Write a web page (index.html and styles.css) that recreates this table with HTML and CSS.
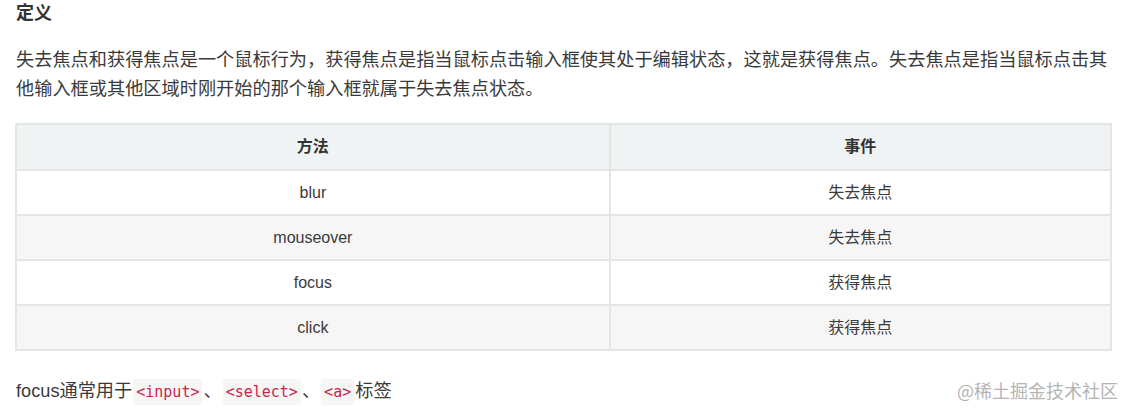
FILE: index.html
```html
<!DOCTYPE html>
<html lang="zh-CN">
<head>
<meta charset="utf-8">
<title>定义</title>
<link rel="stylesheet" href="styles.css">
</head>
<body>
<main class="article">
  <h4 class="heading">定义</h4>
  <p class="para">失去焦点和获得焦点是一个鼠标行为，获得焦点是指当鼠标点击输入框使其处于编辑状态，这就是获得焦点。失去焦点是指当鼠标点击其他输入框或其他区域时刚开始的那个输入框就属于失去焦点状态。</p>
  <table class="grid">
    <thead>
      <tr><th>方法</th><th>事件</th></tr>
    </thead>
    <tbody>
      <tr><td>blur</td><td>失去焦点</td></tr>
      <tr><td>mouseover</td><td>失去焦点</td></tr>
      <tr><td>focus</td><td>获得焦点</td></tr>
      <tr><td>click</td><td>获得焦点</td></tr>
    </tbody>
  </table>
  <p class="para last">focus通常用于<code class="code">&lt;input&gt;</code>、<code class="code">&lt;select&gt;</code>、<code class="code">&lt;a&gt;</code>标签</p>
  <div class="watermark">@稀土掘金技术社区</div>
</main>
</body>
</html>
```

FILE: styles.css
```css
html, body {
  margin: 0;
  padding: 0;
  background: #ffffff;
}
body {
  font-family: "Liberation Sans", "Noto Sans CJK SC", sans-serif;
  color: #333333;
}
.article {
  position: relative;
  width: 1097px;
  padding: 0 0 0 15px;
  height: 415px;
  box-sizing: content-box;
}
.heading {
  margin: 0;
  padding-left: 1px;
  font-size: 18px;
  line-height: 26px;
  font-weight: 700;
  color: #333333;
}
.para {
  margin: 20px 0 0 0;
  padding-left: 1px;
  font-size: 18.2px;
  line-height: 29px;
  color: #3a3a3a;
}
.grid {
  width: 100%;
  margin-top: 19px;
  border-collapse: collapse;
  font-size: 16px;
  color: #3a3a3a;
}
.grid th, .grid td {
  border: 2px solid #e4e6e6;
  text-align: center;
  line-height: 24px;
}
.grid th {
  padding: 10px 8px;
  background: #eff3f3;
  font-weight: 700;
  color: #333333;
}
.grid td {
  padding: 9.5px 8px;
}
.grid tbody tr:nth-child(even) td {
  background: #f6f6f6;
}
.grid tbody tr:nth-child(odd) td {
  background: #ffffff;
}
.para.last {
  margin-top: 26px;
}
.code {
  font-family: "DejaVu Sans Mono", "Liberation Mono", monospace;
  font-size: 15px;
  color: #c7254e;
  background: #f8f5f5;
  padding: 4px 3px;
  border-radius: 2px;
  margin: 0 1px;
}
.watermark {
  position: absolute;
  right: -6px;
  top: 376px;
  font-size: 18px;
  line-height: 28px;
  color: #b4b4b4;
  font-family: "Noto Sans CJK SC", sans-serif;
}
```
